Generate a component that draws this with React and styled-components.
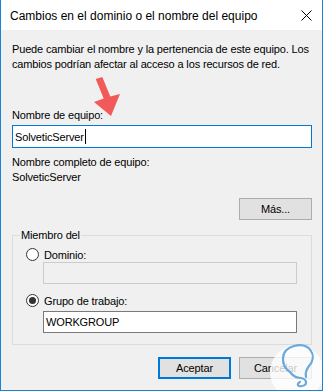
import React from "react";
import styled, { createGlobalStyle } from "styled-components";

const GlobalStyle = createGlobalStyle`
  body {
    margin: 0;
    background: #ffffff;
  }
`;

const Window = styled.div`
  position: relative;
  width: 323px;
  height: 391px;
  box-sizing: border-box;
  border: 1px solid #1883d7;
  border-top: none;
  display: flex;
  flex-direction: column;
  font-family: "Liberation Sans", Arial, sans-serif;
  font-size: 12px;
  color: #000;
  overflow: hidden;
`;

const TitleBar = styled.div`
  height: 30px;
  flex: none;
  background: #fff;
  display: flex;
  align-items: center;
  justify-content: space-between;
  padding: 1px 10px 0 9px;
  box-sizing: border-box;
`;

const Title = styled.div`
  white-space: nowrap;
`;

const Body = styled.div`
  flex: 1;
  background: #f0f0f0;
  display: flex;
  flex-direction: column;
  padding: 12px 10px 0 11px;
  font-size: 11px;
  letter-spacing: -0.15px;
`;

const Text = styled.div`
  line-height: 15px;
  white-space: nowrap;
  margin-top: ${(p) => p.$top || 0}px;
`;

const TextBox = styled.div`
  height: ${(p) => p.$h || 22}px;
  box-sizing: border-box;
  margin-top: ${(p) => p.$top || 0}px;
  margin-left: ${(p) => p.$indent || 0}px;
  border: 1px solid ${(p) => (p.$focus ? "#0078d7" : p.$disabled ? "#cccccc" : "#7a7a7a")};
  background: ${(p) => (p.$disabled ? "#f0f0f0" : "#fff")};
  display: flex;
  align-items: center;
  padding-left: 2px;
  white-space: nowrap;
`;

const Caret = styled.span`
  display: inline-block;
  width: 1px;
  height: 15px;
  background: #000;
  margin-left: 1px;
`;

const ButtonRow = styled.div`
  display: flex;
  justify-content: flex-end;
  gap: 8px;
  margin-top: ${(p) => p.$top || 0}px;
`;

const Button = styled.div`
  width: 73px;
  height: 22px;
  box-sizing: border-box;
  border: ${(p) => (p.$primary ? "2px solid #0078d7" : "1px solid #adadad")};
  background: #e1e1e1;
  display: flex;
  align-items: center;
  justify-content: center;
`;

const GroupBox = styled.fieldset`
  margin: 8px 0 0 0;
  padding: 0 14px 11px 13px;
  border: 1px solid #dcdcdc;
  min-width: 0;
`;

const Legend = styled.legend`
  padding: 0 1px;
  margin-left: -6px;
  line-height: 15px;
`;

const RadioRow = styled.div`
  display: flex;
  align-items: center;
  gap: 5px;
  height: 15px;
  margin-top: ${(p) => p.$top || 0}px;
`;

const Radio = styled.span`
  width: 13px;
  height: 13px;
  box-sizing: border-box;
  border-radius: 50%;
  border: 1px solid #333;
  background: #fff;
  display: flex;
  align-items: center;
  justify-content: center;
  &::after {
    content: "";
    display: ${(p) => (p.$checked ? "block" : "none")};
    width: 7px;
    height: 7px;
    border-radius: 50%;
    background: #333;
  }
`;

const Overlay = styled.svg`
  position: absolute;
  left: -1px;
  top: 0;
  pointer-events: none;
`;

const CloseIcon = () => (
  <svg width="11" height="11" viewBox="0 0 11 11">
    <path d="M0.5 0.5 L10.5 10.5 M10.5 0.5 L0.5 10.5" stroke="#000" strokeWidth="1" fill="none" />
  </svg>
);

export default function App() {
  return (
    <>
      <GlobalStyle />
      <Window>
        <TitleBar>
          <Title>Cambios en el dominio o el nombre del equipo</Title>
          <CloseIcon />
        </TitleBar>
        <Body>
          <Text>Puede cambiar el nombre y la pertenencia de este equipo. Los</Text>
          <Text>cambios podrían afectar al acceso a los recursos de red.</Text>
          <Text $top={36}>Nombre de equipo:</Text>
          <TextBox $h={23} $top={2} $focus>
            SolveticServer
            <Caret />
          </TextBox>
          <Text $top={7}>Nombre completo de equipo:</Text>
          <Text>SolveticServer</Text>
          <ButtonRow $top={13}>
            <Button>Más...</Button>
          </ButtonRow>
          <GroupBox>
            <Legend>Miembro del</Legend>
            <RadioRow $top={4}>
              <Radio />
              Dominio:
            </RadioRow>
            <TextBox $indent={17} $disabled />
            <RadioRow $top={9}>
              <Radio $checked />
              Grupo de trabajo:
            </RadioRow>
            <TextBox $indent={17} $top={3}>
              WORKGROUP
            </TextBox>
          </GroupBox>
          <ButtonRow $top={12}>
            <Button $primary>Aceptar</Button>
            <Button>Cancelar</Button>
          </ButtonRow>
        </Body>
        <Overlay width="323" height="391" viewBox="0 0 323 391">
          <polygon
            points="95.7,79 102.3,77 110.3,96.5 120,94 111,116 94,102 103.7,98.5"
            fill="#f25a5a"
          />
          <circle cx="297" cy="372" r="27" fill="rgba(255,255,255,0.78)" />
          <path
            d="M290,372 C281,366 279,350 294,346 C310,342 318,356 309,366 C306,370 305,373 306,377 M290,372 C293,376 297,378 301,378 C307,379 308,385 302,386 C298,387 296,384 300,382"
            stroke="#6aa9db"
            strokeWidth="2.2"
            fill="none"
            strokeLinecap="round"
          />
        </Overlay>
      </Window>
    </>
  );
}
